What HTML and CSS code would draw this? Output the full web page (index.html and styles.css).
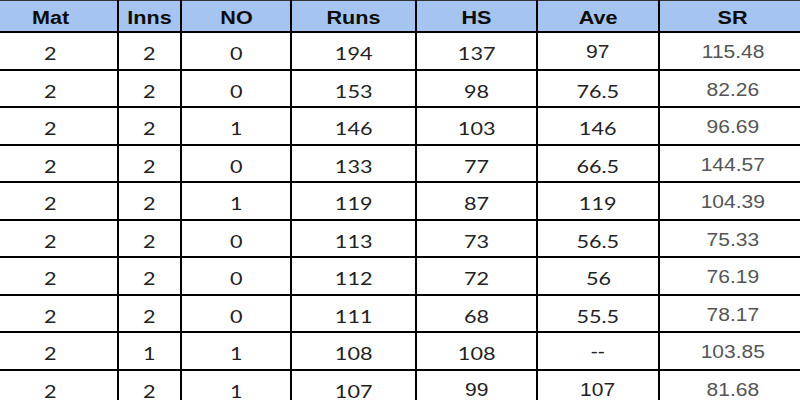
FILE: index.html
```html
<!DOCTYPE html>
<html>
<head>
<meta charset="utf-8">
<link rel="stylesheet" href="styles.css">
</head>
<body>
<table class="stats">
  <colgroup>
    <col class="c-mat"><col class="c-inns"><col class="c-no"><col class="c-runs"><col class="c-hs"><col class="c-ave"><col class="c-sr">
  </colgroup>
  <thead>
    <tr><th><span>Mat</span></th><th><span>Inns</span></th><th><span>NO</span></th><th><span>Runs</span></th><th><span>HS</span></th><th><span>Ave</span></th><th><span>SR</span></th></tr>
  </thead>
  <tbody>
    <tr><td><span>2</span></td><td><span>2</span></td><td><span>0</span></td><td><span>194</span></td><td><span>137</span></td><td class="ar"><span>97</span></td><td class="sr"><span>115.48</span></td></tr>
    <tr><td><span>2</span></td><td><span>2</span></td><td><span>0</span></td><td><span>153</span></td><td><span>98</span></td><td><span>76.5</span></td><td class="sr"><span>82.26</span></td></tr>
    <tr><td><span>2</span></td><td><span>2</span></td><td><span>1</span></td><td><span>146</span></td><td><span>103</span></td><td><span>146</span></td><td class="sr"><span>96.69</span></td></tr>
    <tr><td><span>2</span></td><td><span>2</span></td><td><span>0</span></td><td><span>133</span></td><td><span>77</span></td><td><span>66.5</span></td><td class="sr"><span>144.57</span></td></tr>
    <tr><td><span>2</span></td><td><span>2</span></td><td><span>1</span></td><td><span>119</span></td><td><span>87</span></td><td><span>119</span></td><td class="sr"><span>104.39</span></td></tr>
    <tr><td><span>2</span></td><td><span>2</span></td><td><span>0</span></td><td><span>113</span></td><td><span>73</span></td><td><span>56.5</span></td><td class="sr"><span>75.33</span></td></tr>
    <tr><td><span>2</span></td><td><span>2</span></td><td><span>0</span></td><td><span>112</span></td><td><span>72</span></td><td><span>56</span></td><td class="sr"><span>76.19</span></td></tr>
    <tr><td><span>2</span></td><td><span>2</span></td><td><span>0</span></td><td><span>111</span></td><td><span>68</span></td><td><span>55.5</span></td><td class="sr"><span>78.17</span></td></tr>
    <tr><td><span>2</span></td><td><span>1</span></td><td><span>1</span></td><td><span>108</span></td><td><span>108</span></td><td class="ar"><span>--</span></td><td class="sr"><span>103.85</span></td></tr>
    <tr><td><span>2</span></td><td><span>2</span></td><td><span>1</span></td><td><span>107</span></td><td class="ar"><span>99</span></td><td class="ar"><span>107</span></td><td class="sr"><span>81.68</span></td></tr>
  </tbody>
</table>
</body>
</html>
```

FILE: styles.css
```css
html, body {
  margin: 0;
  padding: 0;
  background: #ffffff;
  overflow: hidden;
}
.stats {
  margin-left: -19px;
  border-collapse: collapse;
  table-layout: fixed;
  width: 825px;
}
.c-mat { width: 136px; }
.c-inns { width: 63px; }
.c-no { width: 110px; }
.c-runs { width: 125px; }
.c-hs { width: 121px; }
.c-ave { width: 122px; }
.c-sr { width: 148px; }
.stats th, .stats td {
  border: 2px solid #000000;
  padding: 0;
  text-align: center;
  vertical-align: middle;
}
.stats span {
  display: inline-block;
  transform: scaleX(1.2);
}
.stats th {
  background: #a6c4f0;
  height: 27px;
  font-family: "Liberation Sans", Arial, sans-serif;
  font-weight: bold;
  font-size: 18px;
  color: #0d0d0d;
  padding-top: 3px;
  line-height: 1;
}
.stats thead tr th {
  border-top: 1px solid #333;
}
.stats td {
  height: 31px;
  font-family: Lato, "Open Sans", sans-serif;
  font-size: 18px;
  color: #222222;
  padding-top: 4.5px;
  line-height: 1;
}
.stats td.ar {
  font-family: "Liberation Sans", Arial, sans-serif;
  font-size: 17.5px;
}
.stats td.sr {
  font-family: "Liberation Sans", Arial, sans-serif;
  font-size: 17.5px;
  color: #555555;
}
```
